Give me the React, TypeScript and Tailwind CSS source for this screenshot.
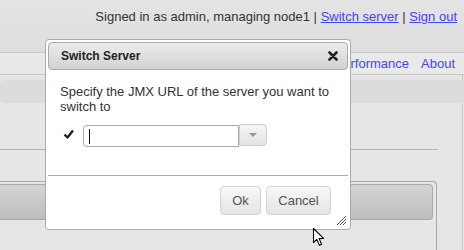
import React from "react";

function Cursor() {
  return (
    <svg width="13" height="20" viewBox="0 0 13 20" className="absolute left-[312px] top-[227px]">
      <path d="M1.5 1.5 L1.5 15.5 L4.8 12.4 L7.4 18.3 L9.6 17.3 L7.1 11.6 L11.6 11.4 Z" fill="#fff" stroke="#000" strokeWidth="1.1" strokeLinejoin="round" />
    </svg>
  );
}

function SwitchServerDialog() {
  return (
    <div className="absolute left-[45px] top-[39px] w-[306px] h-[191px] bg-white border border-[#aaa] rounded-[4px] p-[2px] text-[13px] text-[#333]">
      {/* title bar */}
      <div className="h-[28px] flex items-center justify-between pl-[12px] pr-[9px] rounded-[4px] border border-[#aaa] bg-gradient-to-b from-[#ececec] to-[#d2d2d2]">
        <span className="font-bold text-[12px] text-[#222]">Switch Server</span>
        <svg width="10" height="10" viewBox="0 0 10 10">
          <path d="M1.5 1.5 L8.5 8.5 M8.5 1.5 L1.5 8.5" stroke="#222" strokeWidth="2.6" strokeLinecap="round" />
        </svg>
      </div>

      {/* content */}
      <div className="pl-[12px] pr-[10px] pt-[14px] h-[105px]">
        <p className="leading-[15px]">Specify the JMX URL of the server you want to switch to</p>
        <div className="flex items-start mt-[11px] ml-[3px]">
          <svg width="20" height="12" viewBox="0 0 20 12" className="mt-[4px]">
            <path d="M1.5 5.5 L4.5 8.5 L10 1.5" fill="none" stroke="#222" strokeWidth="2.4" strokeLinejoin="round" />
          </svg>
          <div className="relative">
            <input
              className="w-[156px] h-[22px] border border-[#aaa] rounded-l-[4px] px-[5px] outline-none bg-white"
              defaultValue=""
            />
            <div className="absolute left-[6px] top-[4px] w-[1px] h-[15px] bg-[#111]" />
          </div>
          <div className="w-[28px] h-[22px] -mt-[1px] border border-[#ccc] rounded-r-[4px] bg-gradient-to-b from-[#f6f6f6] to-[#e2e2e2] flex items-center justify-center">
            <div className="w-0 h-0 border-l-[4px] border-r-[4px] border-t-[4px] border-l-transparent border-r-transparent border-t-[#999]" />
          </div>
        </div>
      </div>

      {/* button pane */}
      <div className="border-t border-[#aaa] pt-[10px] pr-[17px] flex justify-end gap-[5px]">
        <button className="w-[41px] h-[29px] rounded-[4px] border border-[#d3d3d3] bg-gradient-to-b from-[#f8f8f8] to-[#e4e4e4] text-[#555]">Ok</button>
        <button className="w-[65px] h-[29px] rounded-[4px] border border-[#d3d3d3] bg-gradient-to-b from-[#f8f8f8] to-[#e4e4e4] text-[#555]">Cancel</button>
      </div>

      {/* resize grip */}
      <svg width="12" height="12" viewBox="0 0 12 12" className="absolute right-[3px] bottom-[3px]">
        <path d="M11 2 L2 11 M11 5 L5 11 M11 8 L8 11" stroke="#555" strokeWidth="1" />
      </svg>
    </div>
  );
}

export default function App() {
  return (
    <div className="relative w-[464px] h-[250px] overflow-hidden bg-[#e6e6e6] text-[13px]" style={{ fontFamily: '"Liberation Sans", Arial, sans-serif' }}>
      {/* header */}
      <div className="h-[53px] bg-gradient-to-b from-[#e4e4e4] to-[#dedede] border-b border-[#c8c8c8] flex justify-end pr-[7px] pt-[7px] text-[#333]">
        <div>
          Signed in as admin, managing node1 |{" "}
          <a className="text-[#4545f0] underline">Switch server</a> |{" "}
          <a className="text-[#4545f0] underline">Sign out</a>
        </div>
      </div>

      {/* nav */}
      <div className="h-[22px] bg-[#e9e9e9] border-b border-[#c8c8c8] flex justify-end items-center gap-[12px] pr-[9px] text-[#4545f0]">
        <a>Performance</a>
        <a>About</a>
      </div>

      {/* content */}
      <div className="mr-[1px] border-r border-[#c8c8c8] h-[175px] pt-[5px]">
        <div className="h-[23px] bg-[#dcdcdc] rounded-[4px] -mr-[5px]" />
        <div className="mt-[46px] mr-[24px] border-b border-[#aab4c8]" />
        <div className="mt-[31px] mr-[25px] h-[70px] border-t border-r border-[#aaa] rounded-tr-[4px] pt-[2px] pr-[3px]">
          <div className="h-[36px] rounded-r-[4px] border border-l-0 border-[#aaa] bg-gradient-to-b from-[#d4d4d4] to-[#bdbdbd]" />
        </div>
      </div>

      <SwitchServerDialog />
      <Cursor />
    </div>
  );
}
